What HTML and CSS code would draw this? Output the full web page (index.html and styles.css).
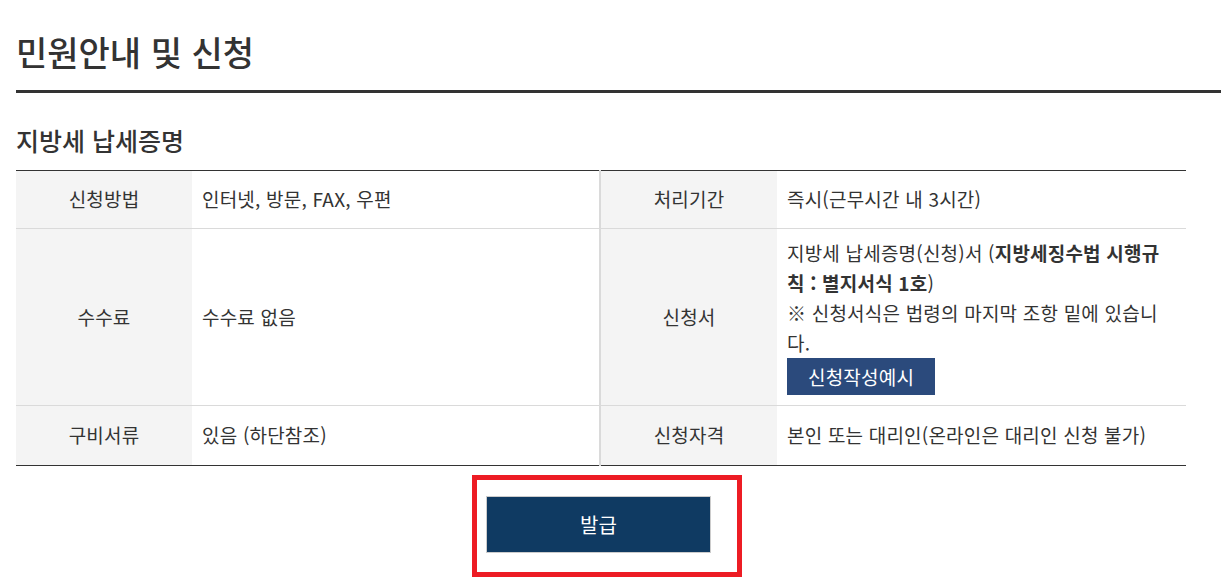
FILE: index.html
```html
<!DOCTYPE html>
<html lang="ko">
<head>
  <meta charset="utf-8">
  <title>민원안내 및 신청</title>
  <link rel="stylesheet" href="styles.css">
</head>
<body>
  <div class="page">
    <h1 class="page-title">민원안내 및 신청</h1>

    <h2 class="sub-title">지방세 납세증명</h2>

    <table class="info-table">
      <colgroup>
        <col class="col-th">
        <col class="col-td">
        <col class="col-th2">
        <col>
      </colgroup>
      <tr>
        <th>신청방법</th>
        <td>인터넷, 방문, FAX, 우편</td>
        <th class="th-right">처리기간</th>
        <td>즉시(근무시간 내 3시간)</td>
      </tr>
      <tr>
        <th>수수료</th>
        <td>수수료 없음</td>
        <th class="th-right">신청서</th>
        <td class="form-cell">
          지방세 납세증명(신청)서 (<strong>지방세징수법 시행규칙 : 별지서식 1호</strong>)<br>
          ※ 신청서식은 법령의 마지막 조항 밑에 있습니다.<br>
          <button class="sample-btn">신청작성예시</button>
        </td>
      </tr>
      <tr class="last-row">
        <th>구비서류</th>
        <td>있음 (하단참조)</td>
        <th class="th-right">신청자격</th>
        <td>본인 또는 대리인(온라인은 대리인 신청 불가)</td>
      </tr>
    </table>

    <div class="btn-area">
      <button class="issue-btn">발급</button>
    </div>
  </div>

  <!-- highlight box over the issue button -->
  <div class="highlight"></div>
</body>
</html>
```

FILE: styles.css
```css
body {
  margin: 0;
  background-color: #ffffff;
  color: #333333;
  font-family: "Noto Sans CJK KR", "Noto Sans", sans-serif;
}

.page {
  padding: 0 0 0 16px;
}

.page-title {
  margin: 0;
  padding: 30px 0 16px;
  font-size: 34px;
  line-height: 44px;
  font-weight: 500;
  border-bottom: 3px solid #333333;
}

.sub-title {
  margin: 30px 0 13px;
  font-size: 25px;
  line-height: 34px;
  font-weight: 500;
}

.info-table {
  width: 1170px;
  border-collapse: collapse;
  table-layout: fixed;
  border-top: 1px solid #333333;
  border-bottom: 1px solid #333333;
  font-size: 19px;
  line-height: 30px;
  letter-spacing: 0.2px;
}

.col-th {
  width: 176px;
}

.col-td {
  width: 408px;
}

.col-th2 {
  width: 177px;
}

.info-table th,
.info-table td {
  padding: 13px 10px 14px;
  border-bottom: 1px solid #dadada;
  vertical-align: middle;
}

.info-table th {
  background-color: #f4f4f4;
  font-weight: 400;
  text-align: center;
}

.info-table td {
  text-align: left;
}

.info-table .th-right {
  border-left: 2px solid #dadada;
}

.info-table .last-row td,
.info-table .last-row th {
  padding: 14px 10px 15px;
  border-bottom: none;
}

.info-table .form-cell {
  padding: 9px 16px 10px 10px;
}

.form-cell strong {
  font-weight: 700;
}

.sample-btn {
  display: block;
  height: 37px;
  padding: 0 21px;
  border: none;
  background-color: #2b4a7c;
  color: #ffffff;
  font-family: inherit;
  font-size: 19px;
  letter-spacing: 0.2px;
  cursor: pointer;
}

.btn-area {
  width: 1170px;
  padding-top: 30px;
  display: flex;
  justify-content: center;
}

.issue-btn {
  width: 225px;
  height: 57px;
  margin-left: -5px;
  border: 1px solid #cccccc;
  background-color: #0f3a62;
  color: #ffffff;
  font-family: inherit;
  font-size: 20px;
  cursor: pointer;
}

.highlight {
  position: absolute;
  left: 472px;
  top: 475px;
  width: 260px;
  height: 92px;
  border: 5px solid #ed1c24;
  pointer-events: none;
}
```
